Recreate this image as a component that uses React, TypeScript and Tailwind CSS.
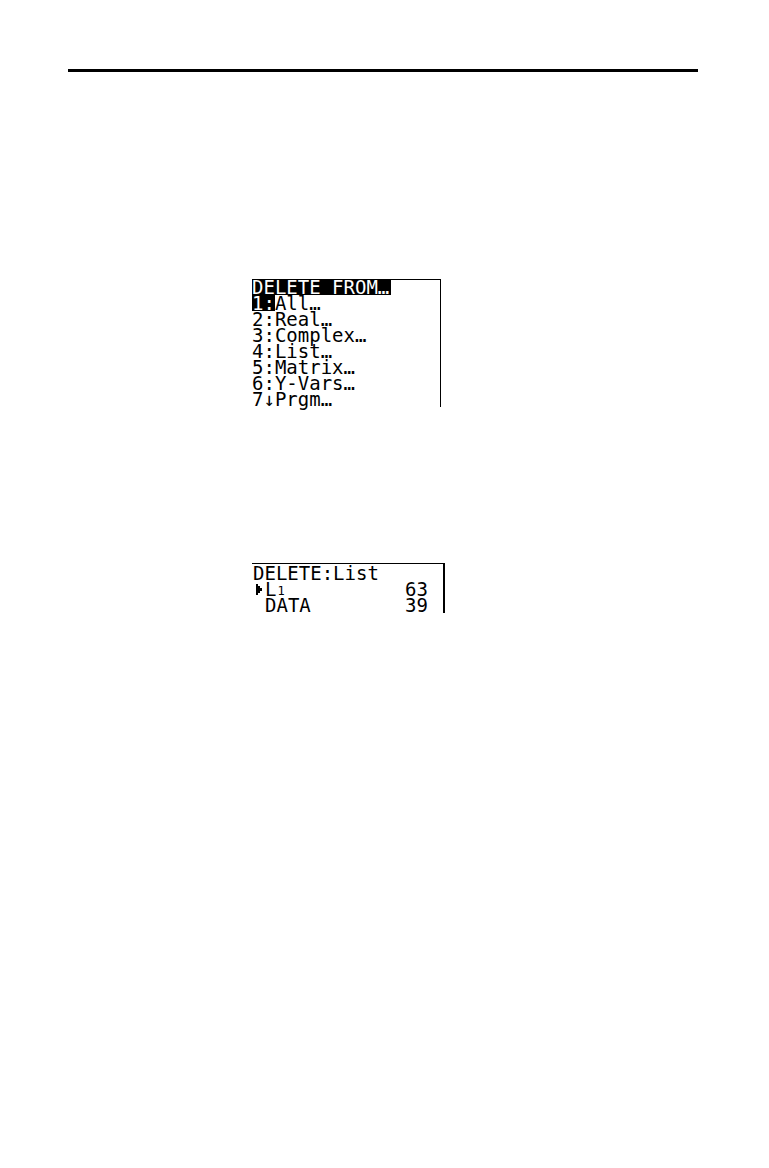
import React from "react";

const menuItems = [
  { mark: "1:", label: "All…" },
  { mark: "2:", label: "Real…" },
  { mark: "3:", label: "Complex…" },
  { mark: "4:", label: "List…" },
  { mark: "5:", label: "Matrix…" },
  { mark: "6:", label: "Y-Vars…" },
  { mark: "7↓", label: "Prgm…" },
];

function DeleteMenu() {
  return (
    <section className="w-[189px] border-t border-r border-black">
      <h2 className="w-[139px] bg-black leading-[15px] text-white">DELETE FROM…</h2>
      <ul>
        {menuItems.map((item, index) => (
          <li key={item.mark} className="h-4">
            <button type="button" className="flex">
              <span className={index === 0 ? "bg-black text-white" : ""}>{item.mark}</span>
              <span>{item.label}</span>
            </button>
          </li>
        ))}
      </ul>
    </section>
  );
}

function DeleteList() {
  return (
    <section className="w-[193px] border-t border-r-2 border-black pt-px">
      <table className="w-full border-collapse">
        <caption className="pl-px text-left">DELETE:List</caption>
        <tbody>
          <tr>
            <td className="p-0">
              <span className="flex h-4">
                <span className="flex w-[13px] items-center pl-1">
                  <svg viewBox="0 0 6 11" className="h-[11px] w-[6px]" aria-hidden="true" shapeRendering="crispEdges">
                    <path d="M0 0h2v2h2v2h2v3H4v2H2v2H0z" />
                  </svg>
                </span>
                <span>L</span>
                <span className="pt-1 pl-px text-xs leading-3">1</span>
              </span>
            </td>
            <td className="p-0 pr-[15px] text-right">63</td>
          </tr>
          <tr>
            <td className="p-0 pl-[13px]">DATA</td>
            <td className="p-0 pr-[15px] text-right">39</td>
          </tr>
        </tbody>
      </table>
    </section>
  );
}

export default function App() {
  return (
    <main className="min-h-screen bg-white pt-[69px] pr-[71px] pl-[68px] text-black">
      <hr className="border-0 border-t-[3px] border-black" />
      <div className="flex flex-col gap-[156px] pt-[207px] pl-46 font-['DejaVu_Sans_Mono',monospace] text-[19px] leading-4">
        <DeleteMenu />
        <DeleteList />
      </div>
    </main>
  );
}
